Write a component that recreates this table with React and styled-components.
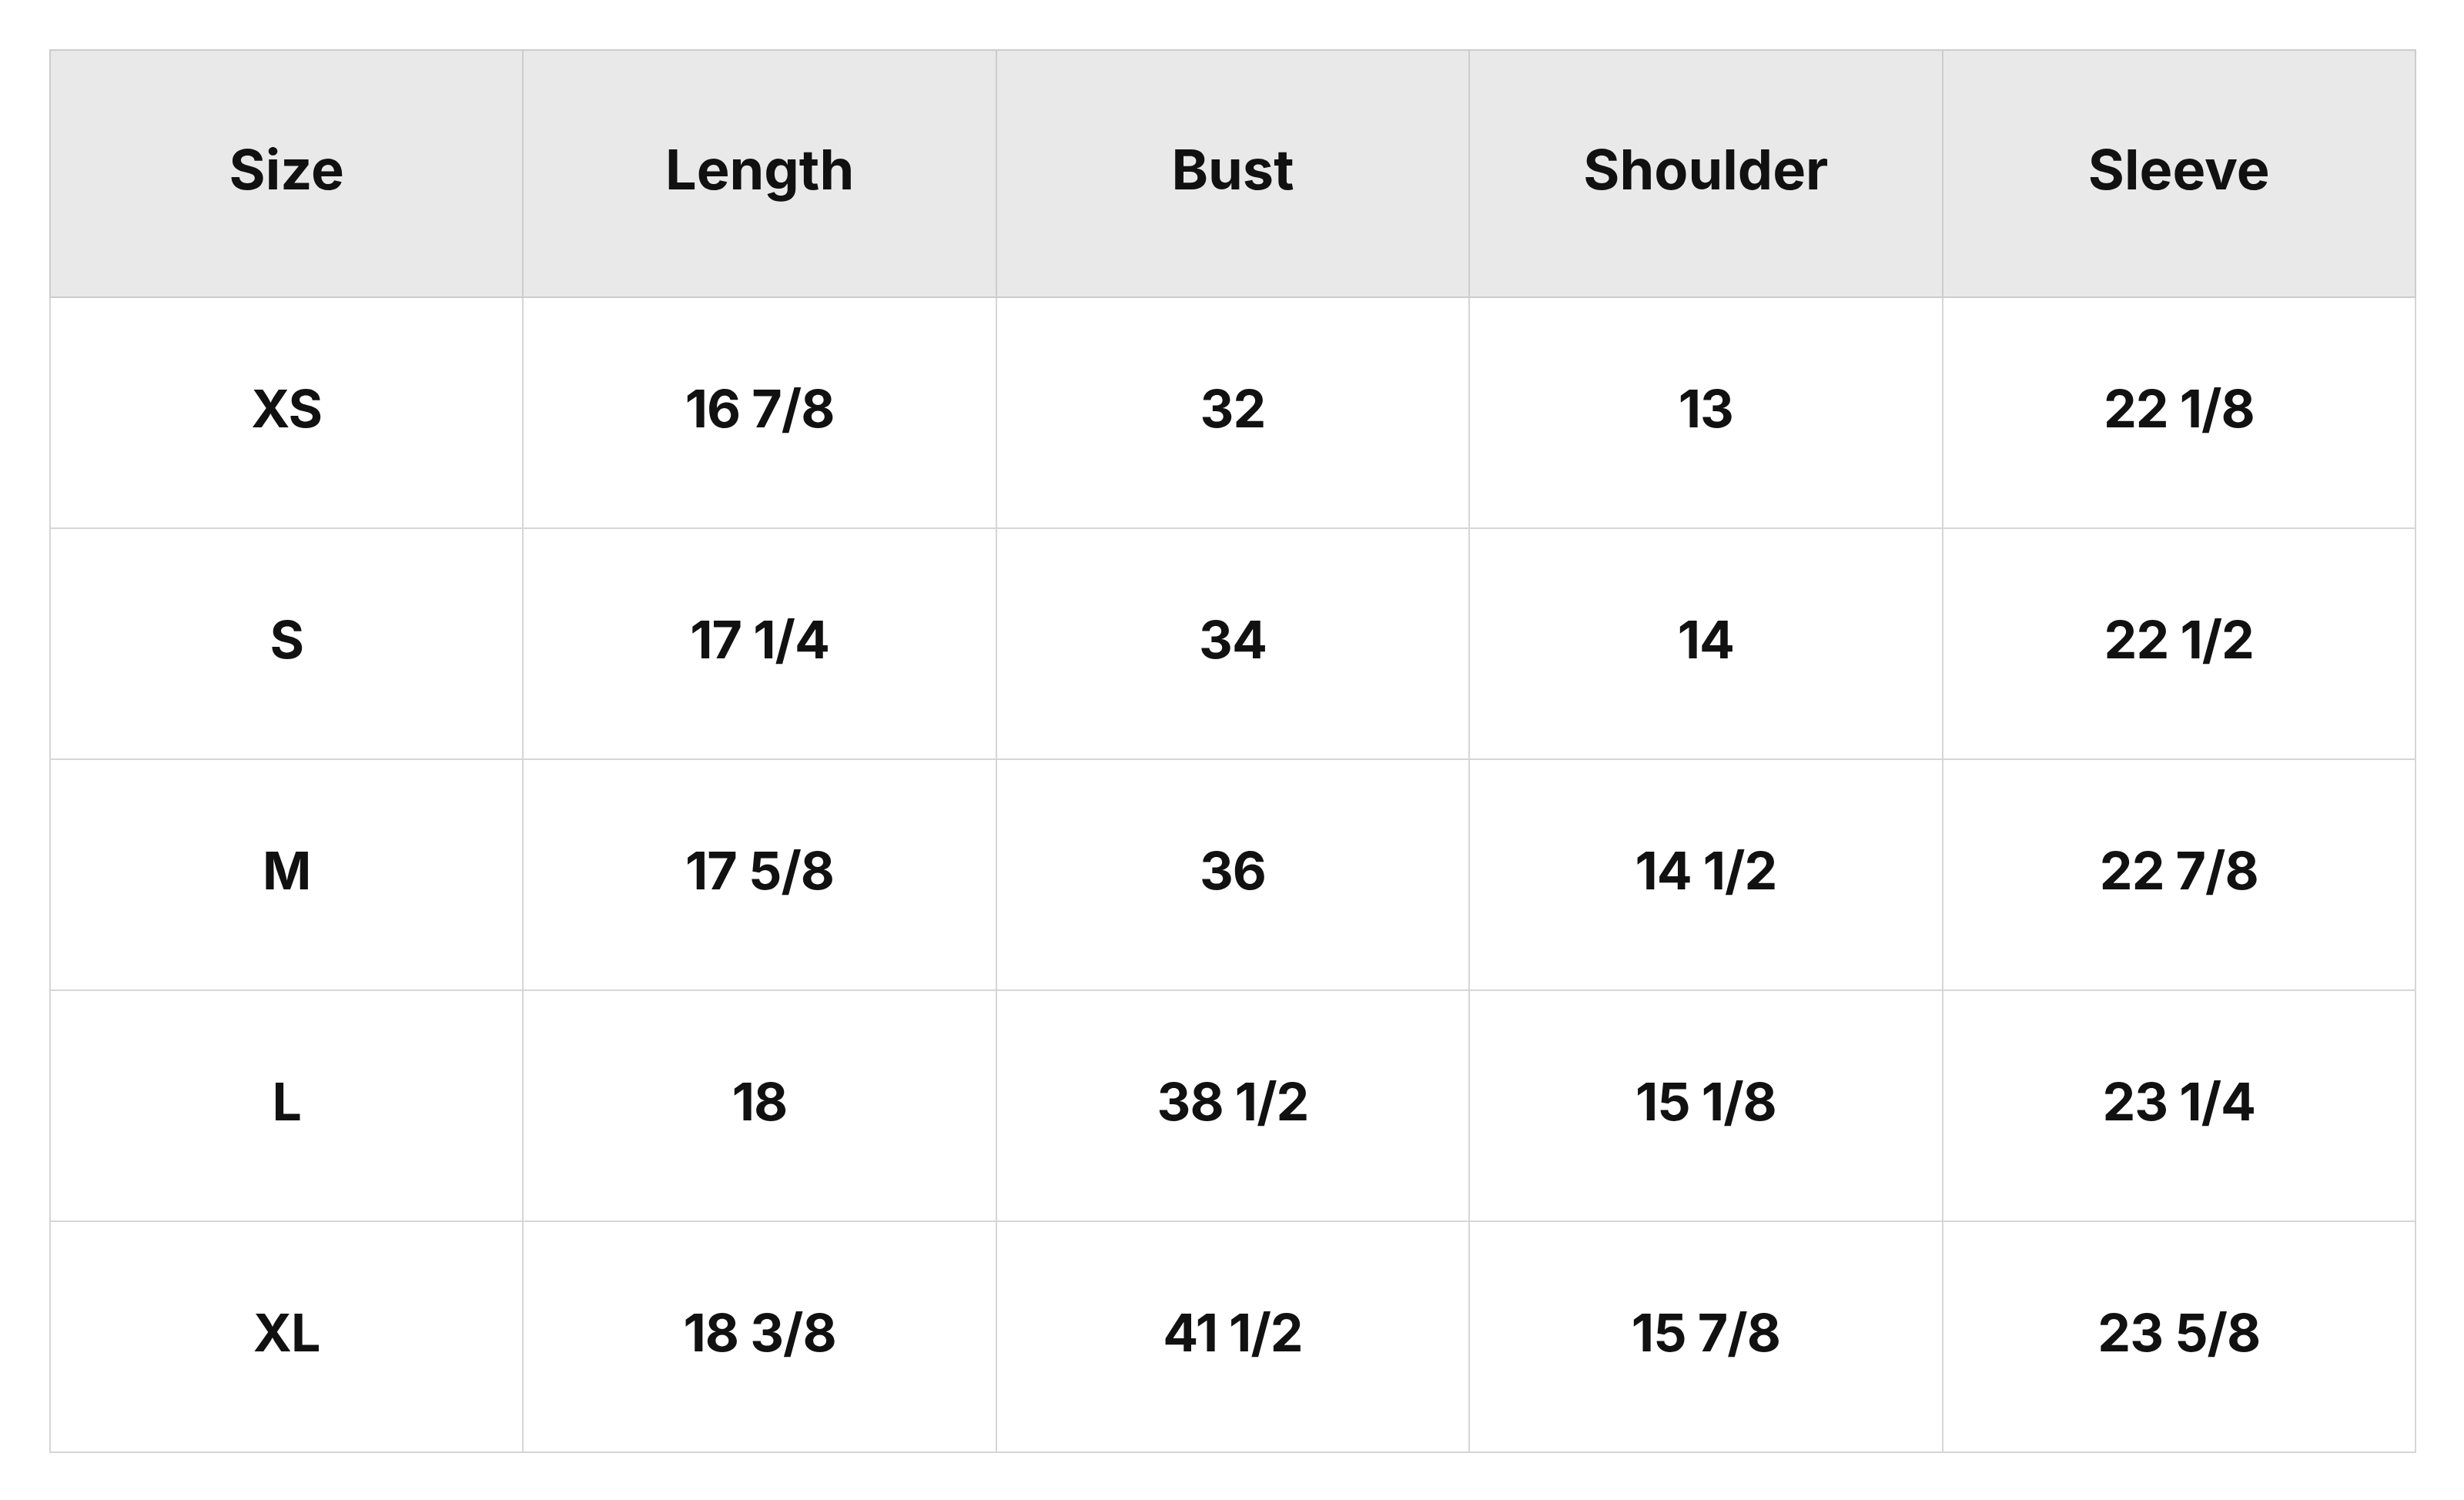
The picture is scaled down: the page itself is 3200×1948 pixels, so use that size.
import React from 'react';
import styled, { createGlobalStyle } from 'styled-components';

const columns = ['Size', 'Length', 'Bust', 'Shoulder', 'Sleeve'];

const rows = [
  ['XS', '16 7/8', '32', '13', '22 1/8'],
  ['S', '17 1/4', '34', '14', '22 1/2'],
  ['M', '17 5/8', '36', '14 1/2', '22 7/8'],
  ['L', '18', '38 1/2', '15 1/8', '23 1/4'],
  ['XL', '18 3/8', '41 1/2', '15 7/8', '23 5/8'],
];

const GlobalStyle = createGlobalStyle`
  html, body {
    margin: 0;
    padding: 0;
    background: #ffffff;
  }
  body {
    font-family: Inter, "Noto Sans", "Liberation Sans", sans-serif;
    color: #111111;
  }
`;

const Page = styled.div`
  padding: 64px 62px 64px 64px;
`;

const SizeTable = styled.table`
  width: 100%;
  border-collapse: collapse;
  table-layout: fixed;
  border: 2px solid #cccccc;
`;

const HeadCell = styled.th`
  height: 321px;
  padding: 0 0 12px;
  box-sizing: border-box;
  background: #e9e9e9;
  border: 2px solid #cccccc;
  font-size: 72px;
  font-weight: 700;
  text-align: center;
  vertical-align: middle;
`;

const Cell = styled.td`
  height: 300px;
  padding: 0 0 12px;
  box-sizing: border-box;
  border: 2px solid #d6d6d6;
  font-size: 68px;
  font-weight: 700;
  letter-spacing: -1px;
  text-align: center;
  vertical-align: middle;
`;

const App = () => {
  return (
    <Page>
      <GlobalStyle />
      <SizeTable>
        <thead>
          <tr>
            {columns.map((col) => (
              <HeadCell key={col}>{col}</HeadCell>
            ))}
          </tr>
        </thead>
        <tbody>
          {rows.map((row) => (
            <tr key={row[0]}>
              {row.map((value, i) => (
                <Cell key={columns[i]}>{value}</Cell>
              ))}
            </tr>
          ))}
        </tbody>
      </SizeTable>
    </Page>
  );
};

export default App;
